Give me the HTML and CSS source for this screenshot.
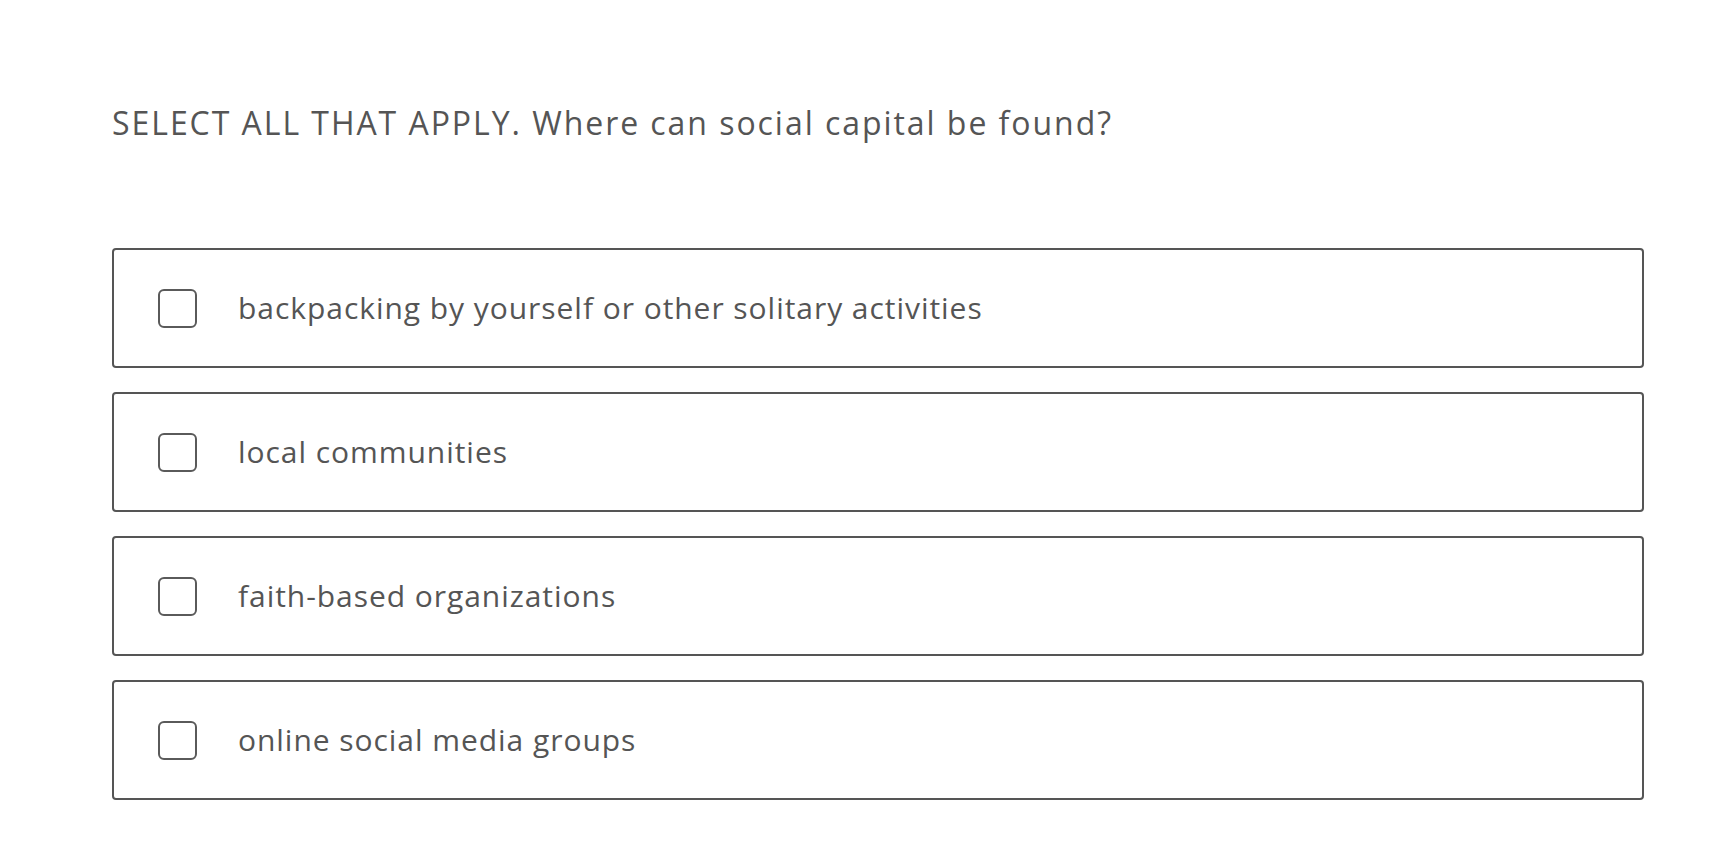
FILE: index.html
```html
<!DOCTYPE html>
<html>
<head>
<meta charset="utf-8">
<link rel="stylesheet" href="styles.css">
</head>
<body>
<div class="quiz">
  <h1 class="question">SELECT ALL THAT APPLY. Where can social capital be found?</h1>
  <div class="options">
    <label class="option"><span class="box"></span><span class="text">backpacking by yourself or other solitary activities</span></label>
    <label class="option"><span class="box"></span><span class="text">local communities</span></label>
    <label class="option"><span class="box"></span><span class="text">faith-based organizations</span></label>
    <label class="option"><span class="box"></span><span class="text">online social media groups</span></label>
  </div>
</div>
</body>
</html>
```
FILE: styles.css
```css
html, body {
  margin: 0;
  padding: 0;
  background: #fff;
}
body {
  font-family: "Open Sans", "Noto Sans", sans-serif;
  color: #555;
}
.quiz {
  padding: 101px 88px 0 112px;
}
.question {
  margin: 0;
  font-size: 32px;
  font-weight: 400;
  line-height: 44px;
  letter-spacing: 1.95px;
  color: #555;
}
.options {
  margin-top: 103px;
  display: flex;
  flex-direction: column;
  gap: 24px;
}
.option {
  box-sizing: border-box;
  height: 120px;
  border: 2px solid #555;
  border-radius: 4px;
  display: flex;
  align-items: center;
  padding-left: 44px;
}
.box {
  box-sizing: border-box;
  width: 39px;
  height: 39px;
  border: 2px solid #5a5a5a;
  border-radius: 6px;
  flex: none;
}
.text {
  margin-left: 41px;
  padding-bottom: 2px;
  font-size: 30px;
  letter-spacing: 0.95px;
  color: #555;
}
```
